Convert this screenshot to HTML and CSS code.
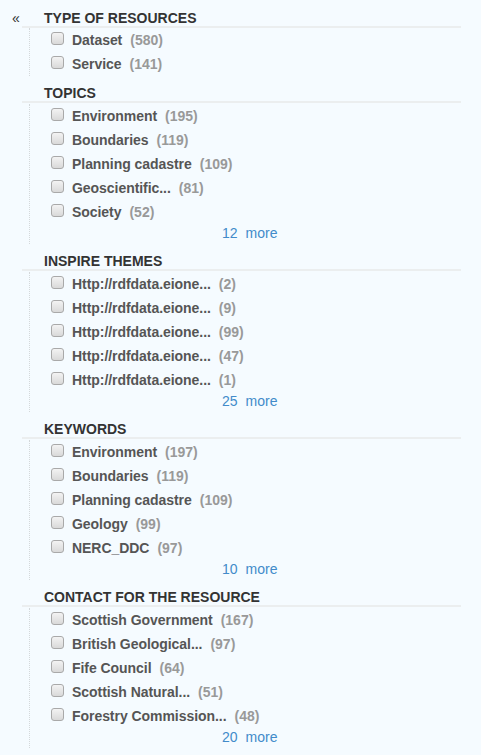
FILE: index.html
```html
<!DOCTYPE html>
<html>
<head>
<meta charset="utf-8">
<link rel="stylesheet" href="styles.css">
</head>
<body>
<div class="page">
  <div class="toggle">«</div>
  <div class="facets">
    <section class="facet">
      <h4 class="facet-title">Type of resources</h4>
      <ul class="facet-list">
        <li class="item"><span class="cb"></span><span class="label">Dataset</span><span class="count">(580)</span></li>
        <li class="item"><span class="cb"></span><span class="label">Service</span><span class="count">(141)</span></li>
      </ul>
    </section>
    <section class="facet">
      <h4 class="facet-title">Topics</h4>
      <ul class="facet-list">
        <li class="item"><span class="cb"></span><span class="label">Environment</span><span class="count">(195)</span></li>
        <li class="item"><span class="cb"></span><span class="label">Boundaries</span><span class="count">(119)</span></li>
        <li class="item"><span class="cb"></span><span class="label">Planning cadastre</span><span class="count">(109)</span></li>
        <li class="item"><span class="cb"></span><span class="label">Geoscientific...</span><span class="count">(81)</span></li>
        <li class="item"><span class="cb"></span><span class="label">Society</span><span class="count">(52)</span></li>
        <li class="more"><a class="more-link"><span>12</span><span>more</span></a></li>
      </ul>
    </section>
    <section class="facet">
      <h4 class="facet-title">Inspire themes</h4>
      <ul class="facet-list">
        <li class="item"><span class="cb"></span><span class="label">Http://rdfdata.eione...</span><span class="count">(2)</span></li>
        <li class="item"><span class="cb"></span><span class="label">Http://rdfdata.eione...</span><span class="count">(9)</span></li>
        <li class="item"><span class="cb"></span><span class="label">Http://rdfdata.eione...</span><span class="count">(99)</span></li>
        <li class="item"><span class="cb"></span><span class="label">Http://rdfdata.eione...</span><span class="count">(47)</span></li>
        <li class="item"><span class="cb"></span><span class="label">Http://rdfdata.eione...</span><span class="count">(1)</span></li>
        <li class="more"><a class="more-link"><span>25</span><span>more</span></a></li>
      </ul>
    </section>
    <section class="facet">
      <h4 class="facet-title">Keywords</h4>
      <ul class="facet-list">
        <li class="item"><span class="cb"></span><span class="label">Environment</span><span class="count">(197)</span></li>
        <li class="item"><span class="cb"></span><span class="label">Boundaries</span><span class="count">(119)</span></li>
        <li class="item"><span class="cb"></span><span class="label">Planning cadastre</span><span class="count">(109)</span></li>
        <li class="item"><span class="cb"></span><span class="label">Geology</span><span class="count">(99)</span></li>
        <li class="item"><span class="cb"></span><span class="label">NERC_DDC</span><span class="count">(97)</span></li>
        <li class="more"><a class="more-link"><span>10</span><span>more</span></a></li>
      </ul>
    </section>
    <section class="facet">
      <h4 class="facet-title">Contact for the resource</h4>
      <ul class="facet-list">
        <li class="item"><span class="cb"></span><span class="label">Scottish Government</span><span class="count">(167)</span></li>
        <li class="item"><span class="cb"></span><span class="label">British Geological...</span><span class="count">(97)</span></li>
        <li class="item"><span class="cb"></span><span class="label">Fife Council</span><span class="count">(64)</span></li>
        <li class="item"><span class="cb"></span><span class="label">Scottish Natural...</span><span class="count">(51)</span></li>
        <li class="item"><span class="cb"></span><span class="label">Forestry Commission...</span><span class="count">(48)</span></li>
        <li class="more"><a class="more-link"><span>20</span><span>more</span></a></li>
      </ul>
    </section>
  </div>
</div>
</body>
</html>
```
FILE: styles.css
```css
html, body {
  margin: 0;
  padding: 0;
  background: #f5fbff;
  font-family: "Liberation Sans", Arial, sans-serif;
  font-size: 14px;
  color: #333;
}
.page {
  display: flex;
  padding-top: 10px;
}
.toggle {
  width: 22px;
  box-sizing: border-box;
  padding-left: 12px;
  font-size: 14px;
  line-height: 16px;
  color: #333;
}
.facets {
  width: 439px;
}
.facet {
  margin-bottom: 9px;
}
.facet-title {
  margin: 0;
  padding-left: 22px;
  font-size: 14px;
  line-height: 16px;
  font-weight: bold;
  text-transform: uppercase;
  color: #333;
  border-bottom: 2px solid #ebeeef;
}
.facet-list {
  list-style: none;
  margin: 0 0 0 7px;
  padding: 0;
  border-left: 1px dotted #d4d8da;
}
.item {
  height: 24px;
  display: flex;
  align-items: center;
  padding-left: 21px;
}
.cb {
  width: 11px;
  height: 11px;
  border: 1px solid #a9a9a9;
  border-radius: 3px;
  background: linear-gradient(#f3f3f3, #d9d9d9);
  margin-right: 8px;
  position: relative;
  top: -2px;
  flex: none;
}
.label {
  font-weight: bold;
  color: #555;
  letter-spacing: -0.05px;
}
.count {
  font-weight: bold;
  color: #999;
  margin-left: 8px;
}
.more {
  height: 20px;
  box-sizing: border-box;
  padding-bottom: 3px;
  display: flex;
  align-items: center;
  padding-left: 192px;
}
.facet-list:has(.more) .item:first-child {
  margin-top: 1px;
}
.more-link {
  color: #428bca;
  display: flex;
  gap: 8px;
}
```
